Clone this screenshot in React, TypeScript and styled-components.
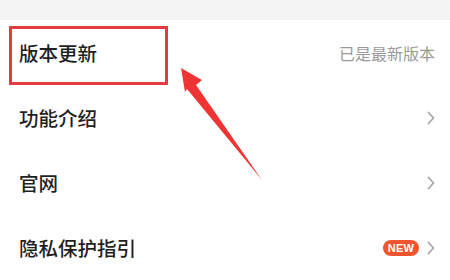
import React from "react";
import styled, { createGlobalStyle } from "styled-components";

const Global = createGlobalStyle`
  html, body { margin: 0; padding: 0; background: #fff; }
  body { font-family: "Noto Sans CJK SC", "Noto Sans", sans-serif; }
`;

const Page = styled.div`
  position: relative;
  width: 450px;
  height: 280px;
  overflow: hidden;
  background: #fff;
`;

const TopBar = styled.div`
  height: 20px;
  background: #f4f4f4;
`;

const List = styled.div`
  display: flex;
  flex-direction: column;
`;

const Row = styled.div`
  height: 65px;
  display: flex;
  align-items: center;
  padding: 0 15px 0 19px;
`;

const Title = styled.span`
  flex: 1;
  font-size: 19.5px;
  font-weight: 500;
  color: #1f1f1f;
  line-height: 1;
`;

const Trail = styled.div`
  display: flex;
  align-items: center;
  gap: 8px;
`;

const Note = styled.span`
  font-size: 16px;
  color: #9a9a9a;
  line-height: 1;
`;

const Badge = styled.span`
  display: inline-flex;
  align-items: center;
  justify-content: center;
  width: 36px;
  height: 16px;
  border-radius: 8px;
  background: #f0552f;
  color: #fff;
  font-family: "Liberation Sans", Arial, sans-serif;
  font-size: 11px;
  font-weight: 700;
  letter-spacing: 0.2px;
`;

const Highlight = styled.div`
  position: absolute;
  left: 9px;
  top: 26px;
  width: 153px;
  height: 53px;
  border: 3px solid #e23a3e;
`;

const ArrowSvg = styled.svg`
  position: absolute;
  left: 0;
  top: 0;
  pointer-events: none;
`;

const Chevron = () => (
  <svg width="8" height="14" viewBox="0 0 8 14">
    <path d="M1.5 1.5 L6.5 7 L1.5 12.5" fill="none" stroke="#a8a8a8" strokeWidth="1.8" strokeLinecap="round" strokeLinejoin="round" />
  </svg>
);

export default function App() {
  return (
    <Page>
      <Global />
      <TopBar />
      <List>
        <Row>
          <Title>版本更新</Title>
          <Trail>
            <Note>已是最新版本</Note>
          </Trail>
        </Row>
        <Row>
          <Title>功能介绍</Title>
          <Trail>
            <Chevron />
          </Trail>
        </Row>
        <Row>
          <Title>官网</Title>
          <Trail>
            <Chevron />
          </Trail>
        </Row>
        <Row>
          <Title>隐私保护指引</Title>
          <Trail>
            <Badge>NEW</Badge>
            <Chevron />
          </Trail>
        </Row>
      </List>
      <Highlight />
      <ArrowSvg width="450" height="280" viewBox="0 0 450 280">
        <polygon
          points="181,68 202,80 196,85 262,180 187,89 185,92"
          fill="#f03434"
        />
      </ArrowSvg>
    </Page>
  );
}
